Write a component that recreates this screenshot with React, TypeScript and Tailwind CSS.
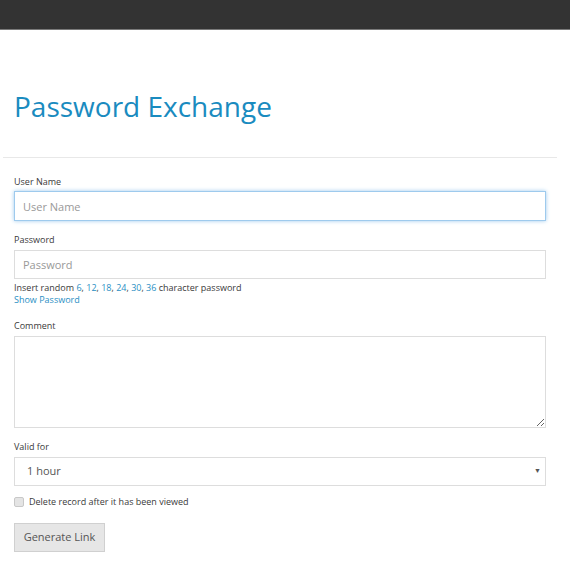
export default function App() {
  const sizes = [6, 12, 18, 24, 30, 36];
  return (
    <div className="min-h-[570px] bg-white font-['Open_Sans',sans-serif] text-[#333]">
      <div className="h-[30px] border-b border-[#7a7a7a] bg-[#333]" />
      <main className="pl-[3px] pr-[13px]">
        <h1 className="mt-[56px] pl-[11px] text-[28px] leading-[40px] font-normal text-[#1a8bbf]">
          Password Exchange
        </h1>
        <hr className="mt-[31px] border-t border-[#e8e8e8]" />
        <form className="pl-[11px] pr-[11px]">
          <label className="mt-[17px] block text-[9px] leading-[14px] text-[#3a3a3a]">User Name</label>
          <input
            autoFocus
            placeholder="User Name"
            className="mt-[2px] block h-[30px] w-full border border-[#9ecaed] px-[8px] text-[11px] text-[#555] shadow-[0_0_4px_#9ecaed] outline-none placeholder:text-[#999]"
          />
          <label className="mt-[12px] block text-[9px] leading-[14px] text-[#3a3a3a]">Password</label>
          <input
            placeholder="Password"
            className="mt-[3px] block h-[29px] w-full border border-[#ddd] px-[8px] text-[11px] text-[#555] outline-none placeholder:text-[#999]"
          />
          <p className="mt-[3px] text-[9px] leading-[12px] text-[#3a3a3a]">
            Insert random{" "}
            {sizes.map((n, i) => (
              <span key={n}>
                <a className="text-[#2a8fc4]">{n}</a>
                {i < sizes.length - 1 ? ", " : " "}
              </span>
            ))}
            character password
          </p>
          <a className="block text-[9px] leading-[12px] text-[#2a8fc4]">Show Password</a>
          <label className="mt-[13px] block text-[9px] leading-[14px] text-[#3a3a3a]">Comment</label>
          <textarea className="mt-[3px] block h-[92px] w-full resize-y border border-[#ddd] px-[8px] outline-none" />
          <label className="mt-[12px] block text-[9px] leading-[14px] text-[#3a3a3a]">Valid for</label>
          <div className="relative mt-[3px]">
            <select className="block h-[29px] w-full appearance-none border border-[#ddd] bg-white px-[12px] text-[11px] text-[#555] outline-none">
              <option>1 hour</option>
            </select>
            <span className="pointer-events-none absolute right-[5px] top-[9px] text-[7px] text-[#555]">▼</span>
          </div>
          <label className="mt-[10px] flex items-center gap-[5px] text-[9px] leading-[12px] text-[#3a3a3a]">
            <input
              type="checkbox"
              className="m-0 h-[10px] w-[10px] appearance-none rounded-[2px] border border-[#c8c8c8] bg-[#e4e4e4]"
            />
            Delete record after it has been viewed
          </label>
          <button
            type="button"
            className="mt-[15px] h-[29px] w-[91px] border border-[#d0d0d0] bg-[#e6e6e6] text-[11px] text-[#555]"
          >
            Generate Link
          </button>
        </form>
      </main>
    </div>
  );
}
